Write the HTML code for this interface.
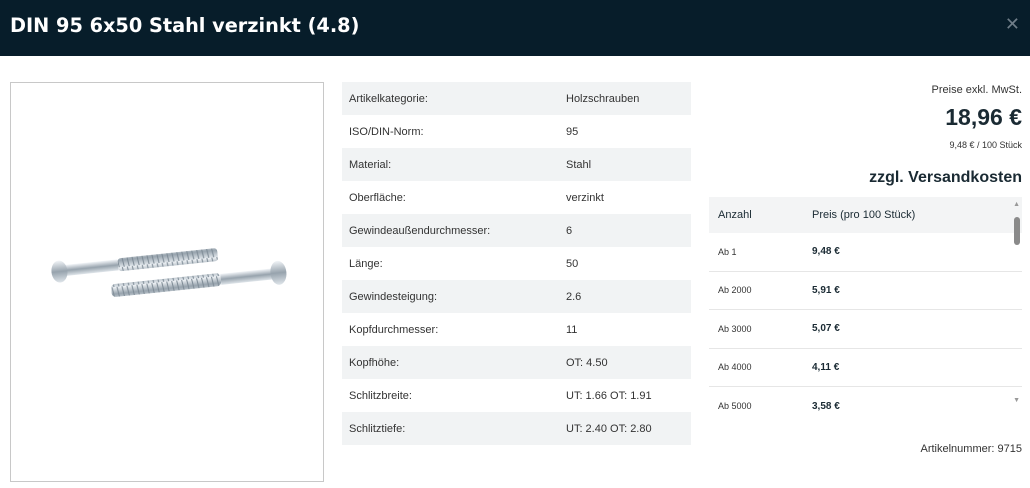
<!DOCTYPE html>
<html><head><meta charset="utf-8"><style>
*{margin:0;padding:0;box-sizing:border-box}
body{width:1030px;height:464px;overflow:hidden;background:#fff;font-family:"Liberation Sans",sans-serif;color:#1a2a33;position:relative}
.hd{position:absolute;left:0;top:0;width:1030px;height:56px;background:#071d2a;color:#fff}
.hd h1{position:absolute;left:10px;top:14px;font-family:"DejaVu Sans",sans-serif;font-size:19.3px;font-weight:bold}
.x{position:absolute;right:10px;top:14px;color:#6f7d88;font-size:18px}
.img{position:absolute;left:10px;top:82px;width:314px;height:400px;border:1px solid #c8c8c8}
table.sp{position:absolute;left:342px;top:82px;width:349px;border-collapse:collapse;font-size:11px}
table.sp td{height:33px;padding-left:7px;color:#333}
table.sp tr:nth-child(odd) td{background:#f1f3f4}
table.sp td:first-child{width:217px}
.r{position:absolute;right:8px;text-align:right}
.pt{position:absolute;left:709px;top:197px;width:313px;font-size:11px}
.pt .h{height:36px;background:#f3f4f5;display:flex;align-items:center}
.pt .row{height:38.5px;border-bottom:1px solid #e6e6e6;display:flex;align-items:center}
.c1{width:103px;padding-left:9px}
.row .c1{font-size:9px;color:#333}
.row .c2{font-weight:bold;font-size:10px}
</style></head><body>
<div class="hd"><h1>DIN 95 6x50 Stahl verzinkt (4.8)</h1><div class="x">✕</div></div>
<div class="img">
<svg width="314" height="400" viewBox="0 0 314 400">
<defs><linearGradient id="g" x1="0" y1="0" x2="0" y2="1"><stop offset="0" stop-color="#f2f5f8"/><stop offset=".5" stop-color="#97a3ad"/><stop offset="1" stop-color="#dfe5ea"/></linearGradient>
<pattern id="t" width="5" height="14" patternUnits="userSpaceOnUse"><rect width="5" height="14" fill="url(#g)"/><line x1="1" y1="0" x2="3" y2="14" stroke="#7d8a95" stroke-width="1"/></pattern></defs>
<g transform="rotate(-6 130 180)"><rect x="52" y="174" width="55" height="11" fill="url(#g)"/><rect x="107" y="173" width="100" height="13" rx="3" fill="url(#t)"/><ellipse cx="48" cy="180" rx="8" ry="11" fill="url(#g)"/></g>
<g transform="rotate(-6 180 200)"><rect x="100" y="193" width="110" height="13" rx="4" fill="url(#t)"/><rect x="210" y="194" width="55" height="11" fill="url(#g)"/><ellipse cx="268" cy="199" rx="8" ry="12" fill="url(#g)"/></g>
</svg></div>
<table class="sp">
<tr><td>Artikelkategorie:</td><td>Holzschrauben</td></tr>
<tr><td>ISO/DIN-Norm:</td><td>95</td></tr>
<tr><td>Material:</td><td>Stahl</td></tr>
<tr><td>Oberfläche:</td><td>verzinkt</td></tr>
<tr><td>Gewindeaußendurchmesser:</td><td>6</td></tr>
<tr><td>Länge:</td><td>50</td></tr>
<tr><td>Gewindesteigung:</td><td>2.6</td></tr>
<tr><td>Kopfdurchmesser:</td><td>11</td></tr>
<tr><td>Kopfhöhe:</td><td>OT: 4.50</td></tr>
<tr><td>Schlitzbreite:</td><td>UT: 1.66 OT: 1.91</td></tr>
<tr><td>Schlitztiefe:</td><td>UT: 2.40 OT: 2.80</td></tr>
</table>
<div class="r" style="top:84px;font-size:11px;color:#333">Preise exkl. MwSt.</div>
<div class="r" style="top:104px;font-size:23px;font-weight:bold">18,96 €</div>
<div class="r" style="top:140px;font-size:9px;color:#333">9,48 € / 100 Stück</div>
<div class="r" style="top:169px;font-size:16px;font-weight:bold">zzgl. Versandkosten</div>
<div class="pt">
<div class="h"><div class="c1">Anzahl</div><div>Preis (pro 100 Stück)</div></div>
<div class="row"><div class="c1">Ab 1</div><div class="c2">9,48 €</div></div>
<div class="row"><div class="c1">Ab 2000</div><div class="c2">5,91 €</div></div>
<div class="row"><div class="c1">Ab 3000</div><div class="c2">5,07 €</div></div>
<div class="row"><div class="c1">Ab 4000</div><div class="c2">4,11 €</div></div>
<div class="row" style="border:0"><div class="c1">Ab 5000</div><div class="c2">3,58 €</div></div>
<div style="position:absolute;right:2px;top:20px;width:6px;height:28px;background:#8a8a8a;border-radius:3px"></div>
<div style="position:absolute;right:2px;top:4px;font-size:7px;color:#999">▲</div>
<div style="position:absolute;right:2px;top:200px;font-size:7px;color:#999">▼</div>
</div>
<div class="r" style="top:443px;font-size:11px;color:#333">Artikelnummer: 9715</div>
</body></html>
